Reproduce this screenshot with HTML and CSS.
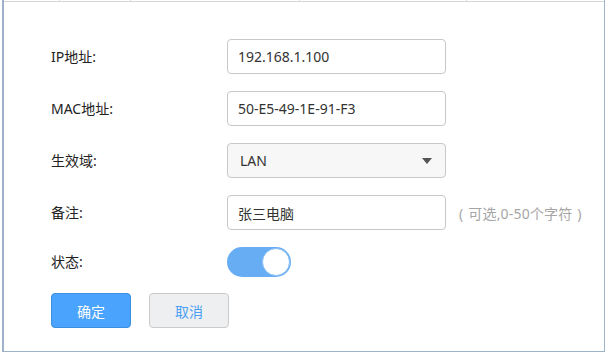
FILE: index.html
```html
<!DOCTYPE html>
<html lang="zh-CN">
<head>
  <meta charset="UTF-8">
  <title>编辑条目</title>
  <link rel="stylesheet" href="styles.css">
</head>
<body>
  <div class="panel">
    <div class="table-tail">
      <span class="cell c1"></span>
      <span class="cell c2"></span>
      <span class="cell c3"></span>
      <span class="cell c4"></span>
      <span class="cell c5"></span>
    </div>

    <form class="edit-form">
      <div class="row">
        <label>IP地址:</label>
        <input class="field" type="text" value="192.168.1.100">
      </div>
      <div class="row">
        <label>MAC地址:</label>
        <input class="field" type="text" value="50-E5-49-1E-91-F3">
      </div>
      <div class="row">
        <label>生效域:</label>
        <div class="field select">
          <span>LAN</span>
          <i class="arrow"></i>
        </div>
      </div>
      <div class="row">
        <label>备注:</label>
        <input class="field" type="text" value="张三电脑">
        <span class="hint">( 可选,0-50个字符 )</span>
      </div>
      <div class="row row-switch">
        <label>状态:</label>
        <div class="switch on"><span class="knob"></span></div>
      </div>
      <div class="actions">
        <button type="button" class="btn btn-primary">确定</button>
        <button type="button" class="btn btn-cancel">取消</button>
      </div>
    </form>
  </div>
</body>
</html>
```

FILE: styles.css
```css
* { margin: 0; padding: 0; box-sizing: border-box; }
body {
  font-family: "Noto Sans", "Noto Sans CJK SC", sans-serif;
  font-size: 14px;
  color: #333;
  background: #fff;
}
.panel {
  margin: 0 3px 0 2px;
  height: 352px;
  border: 1px solid #9db2c9;
  border-top: none;
  border-left-width: 2px;
  background: #fff;
}
.table-tail {
  display: flex;
  height: 2px;
  border-bottom: 1px solid #d6d6d6;
}
.cell { border-right: 1px solid #dcdcdc; }
.c1 { width: 56px; }
.c2 { width: 71px; }
.c3 { width: 169px; }
.c4 { width: 167px; }
.c5 { flex: 1; border-right: none; }

.edit-form {
  padding: 37px 0 0 47px;
  display: flex;
  flex-direction: column;
  gap: 17px;
}
.row {
  display: flex;
  align-items: center;
  height: 35px;
}
.row-switch { height: 30px; }
.row label {
  width: 176px;
  line-height: 20px;
  color: #222;
}
.field {
  width: 219px;
  height: 35px;
  padding: 0 10px;
  border: 1px solid #c8c8c8;
  border-radius: 4px;
  font: inherit;
  color: #333;
  background: #fff;
  outline: none;
}
.select {
  display: flex;
  align-items: center;
  justify-content: space-between;
  padding: 0 12px;
  background: #f7f7f7;
}
.arrow {
  width: 0;
  height: 0;
  border-left: 5px solid transparent;
  border-right: 5px solid transparent;
  border-top: 6px solid #555;
  margin-right: 1px;
}
.hint {
  margin-left: 13px;
  color: #a6a6a6;
  font-size: 14px;
  letter-spacing: 0.2px;
  word-spacing: 1px;
}
.switch {
  width: 64px;
  height: 30px;
  border-radius: 15px;
  background: #66adf4;
  display: flex;
  align-items: center;
  justify-content: flex-end;
  padding-right: 1px;
}
.knob {
  width: 28px;
  height: 28px;
  border-radius: 50%;
  background: #fff;
  border: 1px solid #8cc0f5;
}
.actions {
  display: flex;
  gap: 18px;
  margin-top: -1px;
}
.btn {
  width: 80px;
  height: 35px;
  border-radius: 4px;
  font: inherit;
  font-size: 14px;
  cursor: pointer;
}
.btn-primary {
  background: #4aa3fc;
  border: 1px solid #3a8fe0;
  color: #fff;
}
.btn-cancel {
  background: #eeeff1;
  border: 1px solid #cacaca;
  color: #4a9ff5;
}
```
